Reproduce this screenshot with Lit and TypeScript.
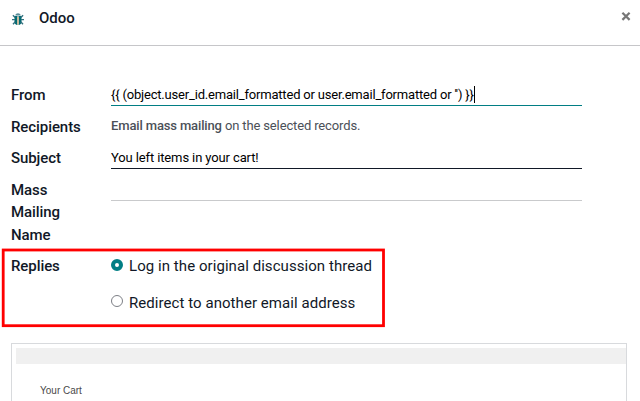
import { LitElement, html, css, svg } from "lit";
import { customElement } from "lit/decorators.js";

@customElement("app-root")
export class AppRoot extends LitElement {
  static styles = css`
    :host {
      display: block;
      position: relative;
      box-sizing: border-box;
      width: 640px;
      height: 401px;
      overflow: hidden;
      background: #fff;
      color: #111827;
      font: 400 15px/22.5px Roboto, sans-serif;
    }
    header {
      display: flex;
      align-items: center;
      box-sizing: border-box;
      height: 46px;
      padding: 0 9px 10px 12px;
      border-bottom: 1px solid #c6c6c9;
    }
    .bug { display: block; width: 12px; height: 12px; margin-top: 2px; }
    h1 { flex: 1; margin: 0 0 0 15px; font: 500 15px/22px Roboto, sans-serif; }
    .close { display: block; width: 10px; height: 10px; margin-top: -3px; }
    .form { display: flex; flex-direction: column; gap: 9px; padding: 38px 58px 0 11px; }
    .row { display: grid; grid-template-columns: 50px 1fr; column-gap: 50px; align-items: start; }
    .label { font-weight: 500; white-space: nowrap; letter-spacing: -0.08px; }
    .label.wrap { white-space: normal; width: 70px; }
    .field {
      box-sizing: border-box;
      height: 22px;
      border-bottom: 1px solid #c9cacc;
      color: #000;
      font-size: 13px;
      line-height: 21px;
      letter-spacing: -0.12px;
      white-space: pre;
    }
    .field.focus { border-color: #017e84; letter-spacing: -0.19px; }
    .field.required { border-color: #111827; }
    .caret { display: inline-block; width: 1px; height: 17px; background: #000; vertical-align: -4px; }
    .hint { color: #4b5058; font-size: 13px; line-height: 20px; letter-spacing: -0.14px; }
    .hint b { font-weight: 500; }
    .options { display: flex; flex-direction: column; gap: 14px; letter-spacing: 0.06px; }
    .option { display: flex; align-items: center; gap: 6px; }
    .dot { box-sizing: border-box; width: 12px; height: 12px; margin-top: -3px; border: 1px solid #7d7f86; border-radius: 50%; }
    .dot.on { margin-top: -2px; border: 4px solid #017e84; }
    .highlight {
      position: absolute;
      left: 1px;
      top: 248px;
      width: 384px;
      height: 80px;
    }
    .frame {
      box-sizing: border-box;
      width: 616px;
      height: 80px;
      margin: 29px 0 0 11px;
      padding: 4px 0 0 4px;
      border: 1px solid #d8dadd;
      border-bottom: 0;
      font: 10px/12px "Liberation Sans", Arial, sans-serif;
      color: #4a4a4a;
    }
    .bar { height: 16px; background: #f0f0f0; }
    .cart { margin: 21px 0 0 24px; }
  `;

  private rows = [
    { label: "From", kind: "focus", text: "{{ (object.user_id.email_formatted or user.email_formatted or '') }}" },
    { label: "Recipients", kind: "hint", text: "" },
    { label: "Subject", kind: "required", text: "You left items in your cart!" },
    { label: "Mass Mailing Name", kind: "", text: "" },
  ];

  private bug = svg`
    <path d="M3.300 2.600C3.500.900 4.700.200 6 .200s2.500.700 2.700 2.400z" fill="#5a8d98"/>
    <path d="M2.500 3h3v9C3.600 11.800 2.500 10.500 2.500 8.700zM6.500 3h3v5.700c0 1.800-1.100 3.100-3 3.300z" fill="#016a73"/>
    <path d="M5.300 4h1.400v7.500H5.300z" fill="#e8bd90"/>
    <path d="M3.200 4.600L.9 2.300M8.800 4.600l2.300-2.300M3 6.600H0M9 6.600h3M3.300 8.800L1 11.200M8.700 8.800l2.300 2.400" fill="none" stroke="#35727f" stroke-width="1.400"/>`;

  private control(kind: string, text: string) {
    if (kind === "hint") {
      return html`<div class="hint"><b>Email mass mailing</b> on the selected records.</div>`;
    }
    return html`<div class="field ${kind}">${text}${kind === "focus" ? html`<span class="caret"></span>` : ""}</div>`;
  }

  render() {
    return html`
      <header>
        <svg class="bug" viewBox="0 0 12 12">${this.bug}</svg>
        <h1>Odoo</h1>
        <svg class="close" viewBox="0 0 10 10"><path d="M1.400 1.700l7.200 7.200M8.600 1.700L1.400 8.900" stroke="#777" stroke-width="2.200"/></svg>
      </header>
      <div class="form">
        ${this.rows.map((r) => html`<div class="row">
          <div class="label ${r.kind ? "" : "wrap"}">${r.label}</div>
          ${this.control(r.kind, r.text)}
        </div>`)}
        <div class="row">
          <div class="label">Replies</div>
          <div class="options">
            <div class="option"><span class="dot on"></span>Log in the original discussion thread</div>
            <div class="option"><span class="dot"></span>Redirect to another email address</div>
          </div>
        </div>
      </div>
      <svg class="highlight" viewBox="0 0 384 80"><rect x="2.200" y="2" width="380.300" height="75.700" fill="none" stroke="#f00" stroke-width="2.800"/></svg>
      <div class="frame">
        <div class="bar"></div>
        <div class="cart">Your Cart</div>
      </div>
    `;
  }
}
